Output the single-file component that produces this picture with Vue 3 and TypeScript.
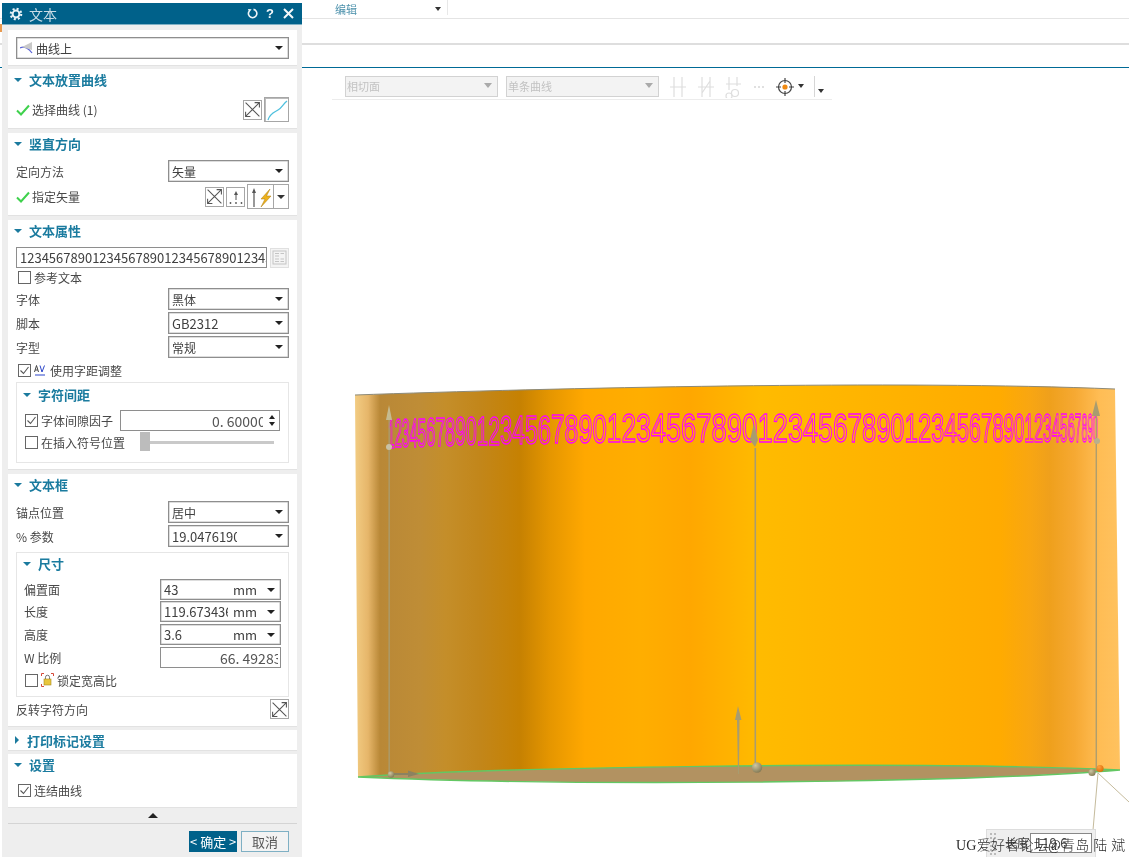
<script setup lang="ts">
interface Stop { at: number; color: string }
interface Glyph { ch: string; transform: string }

const stops: Stop[] = [
  { at: 355, color: '#f2cc83' }, { at: 368, color: '#e6b66a' }, { at: 380, color: '#b98837' },
  { at: 420, color: '#bf8d36' }, { at: 445, color: '#c48e2a' }, { at: 480, color: '#c2861a' },
  { at: 520, color: '#c68102' }, { at: 550, color: '#e59600' }, { at: 585, color: '#ffa800' },
  { at: 640, color: '#ffae00' }, { at: 690, color: '#ffa700' }, { at: 760, color: '#ffbb00' },
  { at: 850, color: '#ffb500' }, { at: 1000, color: '#ffab00' }, { at: 1030, color: '#f8a612' },
  { at: 1050, color: '#efa01c' }, { at: 1075, color: '#f6a933' }, { at: 1100, color: '#ffbd55' },
  { at: 1120, color: '#ffc25f' },
]
const gradStops = stops.map((s) => ({ offset: ((s.at - 355) / 765) * 100 + '%', color: s.color }))

const digits = '1234567890'.repeat(6).split('')
const project = (i: number): number => 735 + 380 * Math.sin(-1.15 + i * 0.0403)
const baseline = (x: number): number => (x < 740 ? 441.5 + 6 * Math.pow((740 - x) / 352, 2) : 441.5)
const glyphs: Glyph[] = digits.map((ch, i) => {
  const x = project(i)
  const w = project(i + 1) - x
  return { ch, transform: `translate(${x.toFixed(1)} ${baseline(x).toFixed(1)}) scale(${(w / 22.8).toFixed(3)} 1)` }
})
</script>

<template>
  <div class="page">
    <header class="ribbon">
      <div class="rib-row rib-one">
        <span class="rib-label">编辑</span>
        <i class="tri tri-s rib-tri"></i>
        <span class="rib-div"></span>
      </div>
      <div class="rib-row rib-two"><span class="rib-mark"></span></div>
      <div class="rib-row rib-three"></div>
    </header>

    <main class="viewport">
      <svg class="scene" viewBox="0 68 1129 789" width="1129" height="789">
        <defs>
          <linearGradient id="body" gradientUnits="userSpaceOnUse" x1="355" y1="0" x2="1120" y2="0">
            <stop v-for="s in gradStops" :key="s.offset" :offset="s.offset" :stop-color="s.color" />
          </linearGradient>
          <radialGradient id="ball" cx="0.35" cy="0.3" r="0.8">
            <stop offset="0" stop-color="#cfc6a0" /><stop offset="1" stop-color="#7d7450" />
          </radialGradient>
          <radialGradient id="ballo" cx="0.35" cy="0.3" r="0.8">
            <stop offset="0" stop-color="#ffa040" /><stop offset="1" stop-color="#d86a00" />
          </radialGradient>
        </defs>
        <path d="M355 395C550 388 900 380 1115 389L1120 770C900 760 500 770 358 777Z" fill="url(#body)" />
        <path d="M355 395C550 388 900 380 1115 389" fill="none" stroke="#8d8a78" stroke-width="1" />
        <path d="M358 777C480 768 900 760 1120 770C950 784 560 786 358 777Z" fill="#b29261" stroke="#63c763" stroke-width="1.4" />
        <g class="digits">
          <text v-for="(g, i) in glyphs" :key="i" :transform="g.transform">{{ g.ch }}</text>
        </g>
        <g fill="#a89c70" stroke="none">
          <rect x="388.5" y="416" width="1.3" height="358" />
          <path d="M389 405L392 420H386Z" fill="#c5bb90" />
          <rect x="754.5" y="448" width="1.6" height="320" />
          <path d="M754 423L758 440L755 447L750 440Z" />
          <rect x="1095.6" y="410" width="1.3" height="360" />
          <path d="M1096 400L1100 416H1092Z" />
          <path d="M738 706L741.5 720L739.5 720L739 774H738L737 720L735 720Z" />
          <path d="M392 773H408V770.5L419 774L408 777V775H392Z" fill="#8c8260" />
        </g>
        <circle cx="389" cy="447" r="3" fill="#c8c2a4" />
        <circle cx="1097" cy="441" r="3" fill="#b9b08c" />
        <circle cx="391" cy="774.5" r="3.2" fill="url(#ball)" />
        <circle cx="757" cy="767.5" r="5.2" fill="url(#ball)" />
        <path d="M1098 773L1129 802M1098 773L1093 830" stroke="#c5bb9c" stroke-width="1" fill="none" />
        <circle cx="1092" cy="772.5" r="3.6" fill="url(#ball)" />
        <circle cx="1100" cy="768.5" r="3.6" fill="url(#ballo)" />
      </svg>

      <div class="bar">
        <span class="dis-select"><span>相切面</span><i class="tri tri-g"></i></span>
        <span class="dis-select"><span>单条曲线</span><i class="tri tri-g"></i></span>
        <svg class="bar-icons" width="128" height="22" viewBox="0 0 128 22">
          <g stroke="#dedede" fill="none" stroke-width="1.2">
            <path d="M5 1V21M13 1V21M1 11H17" />
            <path d="M33 1V21M41 1V21M29 11H45M33 17L41 5" />
            <path d="M60 1V14M68 1V10M57 8H72" />
            <circle cx="66" cy="17" r="3.5" />
            <circle cx="60" cy="20" r="3" />
          </g>
          <g fill="#d6d6d6"><circle cx="86" cy="11" r="1" /><circle cx="90" cy="11" r="1" /><circle cx="94" cy="11" r="1" /></g>
          <g stroke="#444" fill="none" stroke-width="1.2">
            <circle cx="116" cy="11" r="6.5" />
            <path d="M116 2V7M116 15V20M107 11H112M120 11H125" />
          </g>
          <circle cx="116" cy="11" r="2.6" fill="#f08a12" />
        </svg>
        <i class="tri tri-s bar-tri"></i>
        <span class="bar-div"></span>
        <i class="tri tri-s bar-tri2"></i>
      </div>

      <aside class="hud">
        <span class="grip"></span>
        <span class="hud-label">长度</span>
        <span class="hud-input">119.6</span>
      </aside>
      <p class="mark">UG爱好者论坛@青岛 陆 斌</p>
    </main>

    <section class="dialog">
      <header class="title">
        <svg width="14" height="14" viewBox="0 0 14 14" class="gear">
          <circle cx="7" cy="7" r="3.4" fill="none" stroke="#e8f2f6" stroke-width="2" />
          <circle cx="7" cy="7" r="5.2" fill="none" stroke="#e8f2f6" stroke-width="2.2" stroke-dasharray="2 2.08" />
        </svg>
        <span class="title-text">文本</span>
        <svg width="11" height="11" viewBox="0 0 11 11" class="t-reset">
          <path d="M6.5 1.4A4.2 4.2 0 1 1 2 3.4" fill="none" stroke="#eef5f8" stroke-width="1.6" />
          <path d="M1 1L4.6 1.2L2.2 4.4Z" fill="#eef5f8" />
        </svg>
        <span class="t-help">?</span>
        <svg width="11" height="11" viewBox="0 0 11 11" class="t-close">
          <path d="M1 1L10 10M10 1L1 10" stroke="#f4f8fa" stroke-width="2" />
        </svg>
      </header>

      <div class="body">
        <div class="card c-type">
          <div class="select full">
            <svg width="14" height="12" viewBox="0 0 14 12" class="sel-icon">
              <path d="M0 6C4 4 9 6 12 11" fill="none" stroke="#5a63d8" stroke-width="1.2" />
              <path d="M2 5L12 0V8Z" fill="#c9c9c9" />
            </svg>
            <span>曲线上</span>
            <i class="tri tri-d"></i>
          </div>
        </div>

        <div class="card c-curve">
          <h3 class="head"><i class="tri tri-b"></i>文本放置曲线</h3>
          <div class="row sel-row">
            <svg class="check" width="14" height="12" viewBox="0 0 14 12"><path d="M1 6.5L5 10.5L13 1.5" /></svg>
            <span class="label">选择曲线 (1)</span>
            <span class="grow"></span>
            <span class="ibtn i20">
              <svg width="17" height="17" viewBox="0 0 16 16" class="x-arrows"><path d="M1.5 1.5L14.5 14.5M14.5 1.5L1.5 14.5M10 1.5H14.5V6M1.5 10V14.5H6" /></svg>
            </span>
            <span class="ibtn i25">
              <svg width="22" height="22" viewBox="0 0 22 22"><path d="M2 21C4 14 9 13 12 11C16 9 17 5 21 2" fill="none" stroke="#4fc0de" stroke-width="1.3" /></svg>
            </span>
          </div>
        </div>

        <div class="card c-dir">
          <h3 class="head"><i class="tri tri-b"></i>竖直方向</h3>
          <div class="row r22 first">
            <span class="label">定向方法</span>
            <div class="select half"><span>矢量</span><i class="tri tri-d"></i></div>
          </div>
          <div class="row vec-row">
            <svg class="check" width="14" height="12" viewBox="0 0 14 12"><path d="M1 6.5L5 10.5L13 1.5" /></svg>
            <span class="label">指定矢量</span>
            <span class="grow"></span>
            <span class="ibtn i20 vec-btn">
              <svg width="17" height="17" viewBox="0 0 16 16" class="x-arrows"><path d="M1.5 1.5L14.5 14.5M14.5 1.5L1.5 14.5M10 1.5H14.5V6M1.5 10V14.5H6" /></svg>
            </span>
            <span class="ibtn i20 vec-btn">
              <svg width="16" height="16" viewBox="0 0 16 16"><path d="M8 2L10 6H8.5V11H7.5V6H6Z" fill="#555" /><g fill="#555"><circle cx="2.5" cy="14" r="0.9" /><circle cx="8" cy="14" r="0.9" /><circle cx="13.5" cy="14" r="0.9" /></g></svg>
            </span>
            <span class="ibtn split">
              <svg width="26" height="22" viewBox="0 0 26 22">
                <path d="M6 2L8 7H6.6V21H5.4V7H4Z" fill="#555" />
                <path d="M22 3L13 13H17L13 21L23 10H18.5Z" fill="#eeb21c" stroke="#a87a10" stroke-width="0.5" />
              </svg>
              <span class="split-dd"><i class="tri tri-d2"></i></span>
            </span>
          </div>
        </div>

        <div class="card c-attr">
          <h3 class="head"><i class="tri tri-b"></i>文本属性</h3>
          <div class="row text-row">
            <span class="field text-field">123456789012345678901234567890123456789012345678901234567890</span>
            <span class="sym">
              <svg width="15" height="15" viewBox="0 0 15 15"><rect x="1" y="1" width="13" height="13" fill="none" stroke="#c4c4c4" /><path d="M3 3.5H7M3 6H7M8.5 3.5H12M3 9H7M3 11.5H7M8.5 9H12M8.5 11.5H12" stroke="#c4c4c4" /></svg>
            </span>
          </div>
          <label class="row chk-row"><span class="box"></span><span class="label">参考文本</span></label>
          <div class="row r22 pick"><span class="label">字体</span><div class="select half"><span>黑体</span><i class="tri tri-d"></i></div></div>
          <div class="row r22 pick"><span class="label">脚本</span><div class="select half"><span class="lat">GB2312</span><i class="tri tri-d"></i></div></div>
          <div class="row r22 pick"><span class="label">字型</span><div class="select half"><span>常规</span><i class="tri tri-d"></i></div></div>
          <div class="row chk-row kern">
            <span class="box on"><svg width="11" height="11" viewBox="0 0 11 11"><path d="M1.5 5.5L4.5 8.5L9.5 2" /></svg></span>
            <svg width="12" height="13" viewBox="0 0 12 13" class="kern-ico">
              <path d="M0.5 8L2.5 1.5L4.5 8M1.2 6H3.8" stroke="#444" fill="none" />
              <path d="M6 1.5L8 8L10.5 1.5" stroke="#2b45c8" fill="none" />
              <path d="M1 11H11" stroke="#2b45c8" />
            </svg>
            <span class="label">使用字距调整</span>
          </div>
          <div class="group g-space">
            <h4 class="head sub"><i class="tri tri-b"></i>字符间距</h4>
            <div class="row gap-row">
              <span class="box on"><svg width="11" height="11" viewBox="0 0 11 11"><path d="M1.5 5.5L4.5 8.5L9.5 2" /></svg></span>
              <span class="label">字体间隙因子</span>
              <span class="field num"><span class="clip c1">0. 60000</span><span class="spin"><i class="tri tri-up"></i><i class="tri tri-d3"></i></span></span>
            </div>
            <div class="row gap-row2">
              <span class="box"></span>
              <span class="label">在插入符号位置</span>
              <span class="slider"><span class="thumb"></span></span>
            </div>
          </div>
        </div>

        <div class="card c-box">
          <h3 class="head"><i class="tri tri-b"></i>文本框</h3>
          <div class="row r22 first"><span class="label">锚点位置</span><div class="select half"><span>居中</span><i class="tri tri-d"></i></div></div>
          <div class="row r22 pick"><span class="label">% 参数</span><div class="select half"><span class="lat clip c2">19.04761905</span><i class="tri tri-d"></i></div></div>
          <div class="group g-size">
            <h4 class="head sub size-head"><i class="tri tri-b"></i>尺寸</h4>
            <div class="row dim first-dim"><span class="label">偏置面</span><div class="select dimsel"><span class="lat clip c3">43</span><span class="lat unit">mm</span><i class="tri tri-d"></i></div></div>
            <div class="row dim"><span class="label">长度</span><div class="select dimsel"><span class="lat clip c3">119.673436</span><span class="lat unit">mm</span><i class="tri tri-d"></i></div></div>
            <div class="row dim third"><span class="label">高度</span><div class="select dimsel"><span class="lat clip c3">3.6</span><span class="lat unit">mm</span><i class="tri tri-d"></i></div></div>
            <div class="row dim wr"><span class="label">W 比例</span><div class="field dimsel wfield"><span class="clip c4">66. 49283</span></div></div>
            <div class="row lock-row">
              <span class="box"></span>
              <svg width="13" height="14" viewBox="0 0 13 14" class="lock">
                <path d="M0.5 3V0.5H3M10 0.5H12.5V3M0.5 11V13.5H3" stroke="#d64a3a" fill="none" />
                <path d="M4.5 6V4.2A2 2 0 0 1 8.5 4.2V6" stroke="#777" fill="none" />
                <rect x="3" y="6" width="7" height="6" fill="#e8c63c" stroke="#a88b20" stroke-width="0.6" />
              </svg>
              <span class="label">锁定宽高比</span>
            </div>
          </div>
          <div class="row flip-row">
            <span class="label">反转字符方向</span>
            <span class="grow"></span>
            <span class="ibtn i20">
              <svg width="17" height="17" viewBox="0 0 16 16" class="x-arrows"><path d="M1.5 1.5L14.5 14.5M14.5 1.5L1.5 14.5M10 1.5H14.5V6M1.5 10V14.5H6" /></svg>
            </span>
          </div>
        </div>

        <div class="card c-print">
          <h3 class="head closed"><i class="tri tri-r"></i>打印标记设置</h3>
        </div>

        <div class="card c-set">
          <h3 class="head"><i class="tri tri-b"></i>设置</h3>
          <div class="row chk-row link">
            <span class="box on"><svg width="11" height="11" viewBox="0 0 11 11"><path d="M1.5 5.5L4.5 8.5L9.5 2" /></svg></span>
            <span class="label">连结曲线</span>
          </div>
        </div>

        <div class="more"><i class="tri tri-more"></i></div>
        <footer class="foot">
          <button class="btn ok" type="button">&lt; 确定 &gt;</button>
          <button class="btn no" type="button">取消</button>
        </footer>
      </div>
    </section>
  </div>
</template>

<style>
html, body { margin: 0; background: #fff; }
</style>

<style scoped>
.page {
  position: relative; width: 1129px; height: 857px; overflow: hidden; background: #fff;
  display: flex; flex-direction: column; filter: blur(0.35px);
  font-family: "Noto Sans CJK SC", "Noto Sans", sans-serif; font-size: 12px; color: #444;
}
.tri { display: block; width: 0; height: 0; border-style: solid; border-color: transparent; }
.tri-s { border-width: 4px 3.5px 0; border-top-color: #333; }
.tri-g { border-width: 5px 4px 0; border-top-color: #aaa; margin-left: auto; }
.tri-d { border-width: 4px 4px 0; border-top-color: #222; margin-left: auto; }
.tri-d2 { border-width: 4px 4px 0; border-top-color: #333; }
.tri-d3 { border-width: 4px 3.5px 0; border-top-color: #222; }
.tri-up { border-width: 0 3.5px 4px; border-bottom-color: #222; }
.tri-b { border-width: 4px 4px 0; border-top-color: #1b7a9e; }
.tri-r { border-width: 4px 0 4px 4px; border-left-color: #1b7a9e; }
.tri-more { border-width: 0 5px 5px; border-bottom-color: #222; }

.ribbon { flex: none; }
.rib-row { box-sizing: border-box; display: flex; align-items: center; position: relative; }
.rib-one { height: 19px; padding-left: 335px; border-bottom: 1px solid #e4e4e4; }
.rib-label { font-size: 11px; color: #4f93ad; line-height: 18px; }
.rib-tri { margin-left: 78px; }
.rib-div { width: 1px; height: 15px; background: #e8e8e8; margin: 0 0 3px 6px; }
.rib-two { height: 26px; border-bottom: 2px solid #dedede; }
.rib-mark { width: 2px; height: 8px; background: #e89a50; margin-top: -6px; }
.rib-three { height: 23px; border-bottom: 1px solid #006a96; }

.viewport { position: relative; flex: 1; min-height: 0; }
.scene { position: absolute; left: 0; top: 0; }
.digits text {
  font-family: "Liberation Sans", sans-serif; font-size: 41px;
  fill: none; stroke: #ff00ff; stroke-width: 1.2; vector-effect: non-scaling-stroke;
}
.bar {
  position: relative; box-sizing: border-box; width: 500px; height: 32px; margin-left: 332px; padding: 8px 0 0 13px;
  display: flex; align-items: flex-start; border-bottom: 1px solid #ececec;
}
.dis-select {
  box-sizing: border-box; width: 153px; height: 21px; margin-right: 8px; padding: 0 5px 2px 1px;
  display: flex; align-items: center; background: #f3f3f3; border: 1px solid #d2d2d2; color: #c2c2c2; font-size: 11px;
}
.bar-icons { margin-left: 2px; flex: none; }
.bar-tri { margin: 8px 0 0 1px; }
.bar-div { width: 1px; height: 21px; background: #d6d6d6; margin: 0 0 0 10px; }
.bar-tri2 { margin: 13px 0 0 3px; }

.hud {
  position: absolute; left: 986px; top: 761px; width: 110px; height: 40px; box-sizing: border-box;
  background: #efefef; border: 1px solid #ddd; display: flex; align-items: flex-start; padding: 3px 3px 0 3px;
}
.grip { width: 6px; height: 26px; border-left: 2px dotted #bbb; border-right: 2px dotted #bbb; box-sizing: border-box; }
.hud-label { margin: 1px 0 0 9px; font-size: 12px; flex: none; width: 24px; }
.hud-input { margin-left: 1px; width: 62px; height: 20px; flex: none; box-sizing: border-box; background: #fff; border: 1px solid #888; padding-left: 4px; line-height: 18px; font-size: 13px; }
.mark {
  position: absolute; left: 956px; top: 769px; margin: 0; white-space: nowrap; letter-spacing: 0.25px;
  font-family: "Liberation Serif", "Noto Sans CJK SC", serif; font-size: 14px; line-height: 18px; color: #2c2c2c; font-weight: 300;
}

.dialog {
  position: absolute; left: 2px; top: 3px; width: 300px; height: 854px; background: #eee;
  display: flex; flex-direction: column;
}
.title {
  flex: none; height: 21px; background: #00618a; display: flex; align-items: center; border-bottom: 1px solid #7fb0c4;
  box-sizing: content-box;
}
.gear { margin-left: 7px; }
.title-text { margin-left: 6px; font-size: 14px; color: #c8dce6; letter-spacing: 0; }
.t-reset { margin-left: auto; }
.t-help { width: 20px; text-align: center; margin-left: 2px; color: #f4f8fa; font: bold 13px "Liberation Sans", sans-serif; }
.t-close { margin: 0 8px 0 3px; }

.body { padding: 5px 5px 0 6px; display: flex; flex-direction: column; }
.card { background: #fff; box-sizing: border-box; padding: 0 8px; border-bottom: 1px solid #e2e2e2; flex: none; }
.c-type { height: 36px; padding-top: 7px; }
.c-curve { height: 60px; margin-top: 3px; }
.c-dir { height: 83px; margin-top: 4px; }
.c-attr { height: 250px; margin-top: 4px; }
.c-box { height: 253px; margin-top: 4px; }
.c-print { height: 21px; margin-top: 3px; }
.c-set { height: 54px; margin-top: 3px; }

.head {
  box-sizing: border-box; margin: 0 0 0 -2px; height: 22px; padding-bottom: 1px; display: flex; align-items: center;
  font-size: 13px; font-weight: 700; color: #1a7b9f; line-height: 21px;
}
.head .tri { margin: 0 7px 0 0; }
.head.closed { height: 21px; }
.head.closed .tri { margin: 0 8px 0 1px; }
.head.sub { height: 24px; margin-left: -1px; }
.head.size-head { height: 22px; }
.row { display: flex; align-items: center; }
.grow { flex: 1; }
.label { white-space: nowrap; color: #484848; }
.lat { font-size: 13px; }
.check { margin-right: 2px; flex: none; }
.check path { fill: none; stroke: #3fd14d; stroke-width: 2; }

.select {
  box-sizing: border-box; background: #fff; border: 1px solid #8e8e8e; display: flex; align-items: center; padding: 0 5px 0 3px;
  box-shadow: inset 0 0 0 0.5px #bbb; color: #404040;
}
.select.full { height: 22px; }
.sel-icon { margin: 0 2px 0 0; }
.half { width: 121px; height: 22px; margin-left: auto; }
.r22 { height: 22px; }
.first { margin-top: 5px; }
.pick { margin-top: 2px; }

.ibtn { box-sizing: border-box; border: 1px solid #a6a6a6; background: #fff; display: flex; align-items: center; justify-content: center; }
.i20 { width: 19px; height: 20px; }
.i25 { width: 25px; height: 25px; margin-left: 2px; box-shadow: inset 1px 1px 0 #bbb; }
.x-arrows path { fill: none; stroke: #555; stroke-width: 1; }
.sel-row { margin-top: 6px; height: 25px; }
.vec-row { margin-top: 2px; height: 25px; }
.vec-btn { margin-right: 2px; }
.split { width: 42px; height: 25px; justify-content: flex-start; }
.split svg { flex: none; margin-right: -1px; }
.split-dd { flex: 1; height: 100%; border-left: 1px solid #a6a6a6; display: flex; align-items: center; justify-content: center; }

.text-row { margin-top: 5px; height: 21px; }
.field { box-sizing: border-box; background: #fff; border: 1px solid #8e8e8e; color: #404040; font-size: 13px; white-space: nowrap; overflow: hidden; }
.text-field { width: 251px; height: 21px; line-height: 19px; padding: 0 3px; }
.sym { margin-left: 3px; width: 19px; height: 20px; box-sizing: border-box; background: #f4f4f4; border: 1px solid #e0e0e0; display: flex; align-items: center; justify-content: center; }
.box { flex: none; box-sizing: border-box; width: 13px; height: 13px; border: 1px solid #666; background: #fff; margin: 0 3px 0 2px; display: flex; align-items: center; justify-content: center; }
.box svg path { fill: none; stroke: #555; stroke-width: 1.1; }
.chk-row { height: 18px; }
.kern { margin-top: 3px; }
.kern-ico { margin: 0 4px 0 0; flex: none; }

.group { border: 1px solid #e6e6e6; box-sizing: border-box; padding: 0 7px; }
.g-space { height: 81px; margin-top: 3px; }
.gap-row { height: 21px; margin-top: 3px; }
.gap-row .box, .gap-row2 .box { margin-left: 1px; }
.gap-row2 { height: 20px; margin-top: 1px; }
.num { width: 160px; height: 21px; margin-left: 7px; flex: none; display: flex; align-items: center; position: relative; color: #555; font-size: 14px; }
.clip { display: block; overflow: hidden; white-space: nowrap; }
.c1 { width: 142px; padding-left: 91px; box-sizing: border-box; }
.spin { margin-left: auto; margin-right: 4px; display: flex; flex-direction: column; gap: 3px; }
.slider { position: relative; width: 134px; height: 3px; background: #c9c9c9; margin-left: 15px; display: block; align-self: center; }
.thumb { position: absolute; left: 0; top: -9px; width: 10px; height: 19px; background: #bcbcbc; }

.c2 { width: 65px; }
.dim { height: 21px; margin-top: 1px; }
.dim.first-dim { margin-top: 4px; }
.dim.third { margin-top: 2px; }
.dim.wr { margin-top: 2px; }
.dimsel { width: 121px; height: 21px; margin-left: auto; flex: none; }
.wfield { display: flex; align-items: center; }
.c3 { width: 64px; flex: none; }
.c4 { width: 117px; padding-left: 59px; box-sizing: border-box; color: #555; font-size: 14px; }
.unit { margin-left: 5px; }
.g-size { height: 145px; margin-top: 5px; }
.lock-row { height: 18px; margin-top: 3px; }
.lock-row .box { margin-left: 1px; }
.lock { margin: 0 3px 0 0; flex: none; }
.flip-row { margin-top: 2px; height: 20px; }

.link { margin-top: 5px; }
.more { height: 15px; display: flex; align-items: center; justify-content: center; border-bottom: 1px solid #d4d4d4; }
.foot { display: flex; justify-content: flex-end; gap: 4px; padding: 7px 8px 0 0; }
.btn { box-sizing: border-box; width: 48px; height: 21px; padding: 0; font: 13px "Noto Sans CJK SC", sans-serif; line-height: 19px; white-space: nowrap; }
.ok { background: #00618a; border: 1px solid #00618a; color: #fff; }
.no { background: #f3f3f3; border: 1px solid #7fb0c4; color: #555; }
</style>
